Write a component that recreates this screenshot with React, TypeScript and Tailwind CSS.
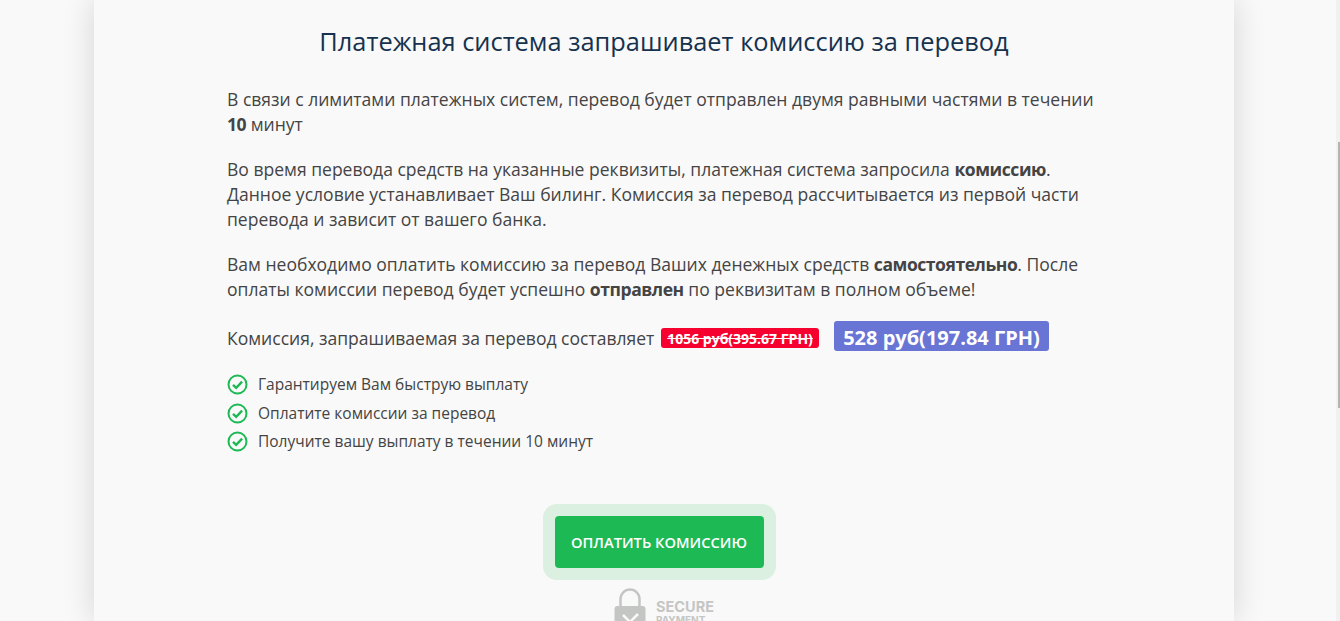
const font = "font-['Open_Sans',sans-serif]"
const strong = "font-bold tracking-[-0.45px]"

const steps = [
  "Гарантируем Вам быструю выплату",
  "Оплатите комиссии за перевод",
  "Получите вашу выплату в течении 10 минут",
]

function CheckIcon() {
  return (
    <svg width="21" height="21" viewBox="0 0 21 21" fill="none" className="shrink-0">
      <circle cx="10.5" cy="10.5" r="9" stroke="#1db954" strokeWidth="2" />
      <path d="M6 10.8l3.2 3.1 5.9-6.2" stroke="#1db954" strokeWidth="2.4" />
    </svg>
  )
}

function LockIcon() {
  return (
    <svg width="32" height="48" viewBox="0 0 32 48" fill="none" className="shrink-0">
      <path d="M6.5 20V11a9.5 9.5 0 0 1 19 0v9" stroke="#c4c6c4" strokeWidth="2.5" />
      <rect x="0.5" y="18" width="31" height="28" rx="3" fill="#c4c6c4" />
      <path d="M9 27l7 7 8-8" stroke="#f9f9f9" strokeWidth="2.5" />
    </svg>
  )
}

export default function App() {
  return (
    <div className={`relative h-[621px] overflow-hidden bg-[#f9f9f9] ${font}`}>
      <div className="ml-[94px] h-[621px] w-[1140px] bg-[#f9f9f9] pl-[133px] pr-[133px] pt-[23px] shadow-[0_0_30px_rgba(0,0,0,0.15)]">
        <h1 className="text-center text-[25.4px] font-normal leading-[36px] text-[#16324f]">
          Платежная система запрашивает комиссию за перевод
        </h1>

        <div className="mt-[28px] text-[17.55px] leading-[25px] text-[#444444]">
          <p>
            В связи с лимитами платежных систем, перевод будет отправлен двумя равными частями в течении <b className={strong}>10</b> минут
          </p>
          <p className="mt-[20px]">
            Во время перевода средств на указанные реквизиты, платежная система запросила <b className={strong}>комиссию</b>. Данное условие устанавливает Ваш билинг. Комиссия за перевод рассчитывается из первой части перевода и зависит от вашего банка.
          </p>
          <p className="mt-[20px]">
            Вам необходимо оплатить комиссию за перевод Ваших денежных средств <b className={strong}>самостоятельно</b>. После оплаты комиссии перевод будет успешно <b className={strong}>отправлен</b> по реквизитам в полном объеме!
          </p>
          <div className="mt-[19px] flex h-[30px] items-center">
            <span className="mt-[4px] w-[424px] shrink-0 whitespace-nowrap">Комиссия, запрашиваемая за перевод составляет</span>
            <span className="ml-[10px] mt-[4px] flex h-[20px] w-[158px] items-center justify-center rounded-[3px] bg-[#f5002f] text-[14px] font-bold text-white line-through">
              1056 руб(395.67 ГРН)
            </span>
            <span className="ml-[15px] flex h-[30px] w-[215px] items-center justify-center rounded-[3px] bg-[#6875d5] pt-[3px] text-[20px] font-bold text-white">
              528 руб(197.84 ГРН)
            </span>
          </div>
        </div>

        <ul className="mt-[23px] flex flex-col gap-[7.5px] text-[15.5px] leading-[21px] text-[#444444]">
          {steps.map((step) => (
            <li key={step} className="flex items-center gap-[10px]">
              <CheckIcon />
              <span>{step}</span>
            </li>
          ))}
        </ul>

        <div className="mr-[10px] mt-[52px] flex flex-col items-center">
          <div className="rounded-[14px] bg-[#dbf0e1] p-[12px]">
            <button className="flex h-[52px] w-[209px] items-center justify-center rounded-[4px] bg-[#1db954] text-[14.7px] font-semibold text-white">
              ОПЛАТИТЬ КОМИССИЮ
            </button>
          </div>
          <div className="ml-[10px] mt-[8px] flex items-start gap-[10px]">
            <LockIcon />
            <div className="mt-[11px] font-['Inter',sans-serif] font-bold text-[#c4c6c4]">
              <div className="text-[14.5px] leading-[16px]">SECURE</div>
              <div className="text-[10px] leading-[11px]">PAYMENT</div>
            </div>
          </div>
        </div>
      </div>

      <div className="absolute right-0 top-0 h-full w-[4px] bg-[#f1f1f1]">
        <div className="ml-[2px] mt-[142px] h-[266px] w-[2px] bg-[#b4b4b4]" />
      </div>
    </div>
  )
}
